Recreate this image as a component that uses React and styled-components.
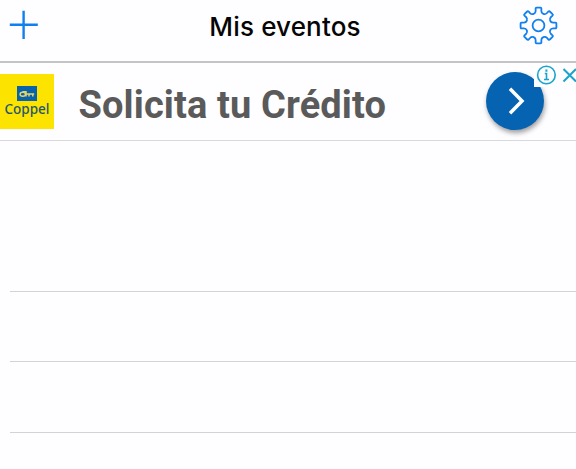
import React from "react";
import styled, { createGlobalStyle } from "styled-components";

const GlobalStyle = createGlobalStyle`
  * { box-sizing: border-box; }
  body { margin: 0; background: #fefdff; overflow: hidden; }
`;

const Screen = styled.main`
  width: 576px;
  height: 469px;
  overflow: hidden;
  display: flex;
  flex-direction: column;
  background: #fefdff;
`;

const NavBar = styled.header`
  flex: none;
  height: 63px;
  display: grid;
  grid-template-columns: 80px 1fr 80px;
  align-items: start;
  border-bottom: 2px solid #c4c4c6;
`;

const IconButton = styled.button`
  border: 0;
  padding: 0;
  margin: ${(p) => p.$margin};
  width: ${(p) => p.$size}px;
  height: ${(p) => p.$size}px;
  background: none;
  color: #0f80ee;
  justify-self: ${(p) => p.$side};
  svg { display: block; }
`;

const Title = styled.h1`
  margin: 11px 0 0;
  padding-right: 6px;
  text-align: center;
  white-space: nowrap;
  font: 530 26px/32px Inter, sans-serif;
  letter-spacing: 0.15px;
  color: #050505;
`;

const AdBanner = styled.section`
  position: relative;
  flex: none;
  height: 78px;
  display: flex;
  align-items: flex-start;
  border-bottom: 1px solid #d9d8db;
`;

const AdLogo = styled.div`
  width: 54px;
  height: 55px;
  margin-top: 11px;
  padding-top: 12px;
  background: #fce300;
  display: flex;
  flex-direction: column;
  align-items: center;
`;

const LogoName = styled.span`
  margin-top: 1px;
  font: 500 13.5px/15px "Noto Sans", Lato, sans-serif;
  letter-spacing: 0;
  color: #24566e;
`;

const AdText = styled.p`
  margin: 19px 0 0 24.5px;
  flex: 1;
  white-space: nowrap;
  font: 700 38px/46px Roboto, sans-serif;
  letter-spacing: 0.12px;
  color: #5a5a5a;
`;

const AdAction = styled.button`
  width: 58px;
  height: 58px;
  margin: 9px 32px 0 0;
  padding: 0;
  border: 0;
  border-radius: 50%;
  background: #0563b1;
  box-shadow: 1px 3px 5px rgba(0, 0, 0, 0.38);
  svg { display: block; }
`;

const AdChoices = styled.div`
  position: absolute;
  top: 0;
  right: 0;
  width: 42px;
  height: 24px;
  background: #fefdff;
  svg { display: block; }
`;

const EventList = styled.ul`
  list-style: none;
  margin: 0;
  padding: 0 0 0 10px;
`;

const EventRow = styled.li`
  height: ${(p) => p.$height}px;
  border-bottom: 1px solid #d3d3d6;
`;

const TEETH = 8;

function gearPath() {
  const point = (radius, degrees) => {
    const a = ((degrees - 90) * Math.PI) / 180;
    return `${(radius * Math.cos(a)).toFixed(2)} ${(radius * Math.sin(a)).toFixed(2)}`;
  };
  let d = "";
  for (let i = 0; i < TEETH; i += 1) {
    const t = (i * 360) / TEETH;
    d += `${i ? "L" : "M"}${point(15.1, t - 10.8)}`;
    d += `L${point(17.2, t - 9.6)}Q${point(18.2, t - 9)} ${point(18, t - 6)}`;
    d += `L${point(18, t + 6)}Q${point(18.2, t + 9)} ${point(17.2, t + 9.6)}`;
    d += `L${point(15.1, t + 10.8)}`;
    d += `C${point(12, t + 13)} ${point(12, t + 32)} ${point(15.1, t + 34.2)}`;
  }
  return `${d}Z`;
}

const PlusIcon = () => (
  <svg width="30" height="30" viewBox="0 0 30 30" stroke="currentColor" strokeWidth="2.4">
    <path d="M0.8 14.8H28.8M14.6 0.8V29" />
  </svg>
);

const GearIcon = () => (
  <svg width="40" height="40" viewBox="-20.5 -20.5 40 40" fill="none" stroke="currentColor" strokeWidth="1.8" strokeLinejoin="round">
    <path d={gearPath()} />
    <circle r="5.9" />
  </svg>
);

const KeyIcon = () => (
  <svg width="20" height="15" viewBox="0 0 20 15">
    <path fill="#0863ac" d="M0 0h20v15H0z" />
    <g fill="none" stroke="#e3d56a" strokeWidth="1.5">
      <ellipse cx="5.8" cy="8.3" rx="2.7" ry="2" />
      <path d="M8.3 8H17.2M12 8v2.4M15.8 8v2.5M5.5 5.8h3.5v4.8" />
    </g>
  </svg>
);

const ChevronIcon = () => (
  <svg width="58" height="58" viewBox="0 0 58 58" fill="none" stroke="#fff" strokeWidth="3.5">
    <path d="M24 16.8L36 29L24 41.2" />
  </svg>
);

const AdChoicesIcons = () => (
  <svg width="42" height="24" viewBox="0 0 42 24" fill="none" stroke="#18a4cc" strokeWidth="2">
    <circle cx="12.4" cy="12" r="8.8" strokeWidth="1.6" />
    <path d="M10.8 10.5H12.5V16.5M10 16.5H15" strokeWidth="1.6" />
    <path d="M12.4 6.5V8.8M29.5 6L42 18.5M29.5 18.5L42 6" />
  </svg>
);

export default function App() {
  return (
    <Screen>
      <GlobalStyle />
      <NavBar>
        <IconButton aria-label="Agregar evento" $size={30} $side="start" $margin="10px 0 0 9px">
          <PlusIcon />
        </IconButton>
        <Title>Mis eventos</Title>
        <IconButton aria-label="Ajustes" $size={40} $side="end" $margin="5px 18px 0 0">
          <GearIcon />
        </IconButton>
      </NavBar>
      <AdBanner>
        <AdLogo>
          <KeyIcon />
          <LogoName>Coppel</LogoName>
        </AdLogo>
        <AdText>Solicita tu Crédito</AdText>
        <AdAction aria-label="Abrir anuncio">
          <ChevronIcon />
        </AdAction>
        <AdChoices>
          <AdChoicesIcons />
        </AdChoices>
      </AdBanner>
      <EventList>
        <EventRow $height={151} />
        <EventRow $height={70} />
        <EventRow $height={71} />
      </EventList>
    </Screen>
  );
}
